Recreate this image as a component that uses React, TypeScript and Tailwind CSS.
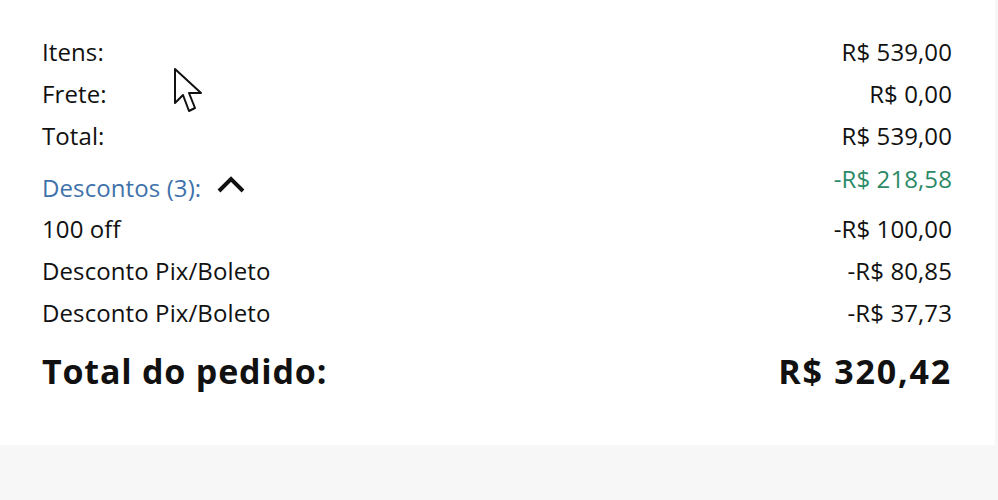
import React from "react";

const Row = ({ label, value, valueClass = "" }: { label: string; value: string; valueClass?: string }) => (
  <div className="flex h-[42px] items-center justify-between">
    <span>{label}</span>
    <span className={valueClass}>{value}</span>
  </div>
);

export default function App() {
  return (
    <div className="relative h-[500px] w-[998px] bg-[#f7f7f7]" style={{ fontFamily: '"Open Sans", "Noto Sans", sans-serif' }}>
      <div className="flex h-[445px] w-[995px] flex-col bg-white pl-[42px] pr-[43px] pt-[31px] text-[24px] font-medium tracking-[0.1px] text-[#111]">
        <Row label="Itens:" value="R$ 539,00" />
        <Row label="Frete:" value="R$ 0,00" />
        <Row label="Total:" value="R$ 539,00" />
        <div className="flex h-[51px] justify-between">
          <div className="flex items-center gap-[15px] pt-[11px]">
            <span className="text-[#3f72ab]">Descontos (3):</span>
            <svg width="30" height="20" viewBox="0 0 30 20" className="mt-[-8px]">
              <path d="M3 17 L15 5 L27 17" fill="none" stroke="#111" strokeWidth="4" />
            </svg>
          </div>
          <span className="pt-[4px] text-[#2b8a67]">-R$ 218,58</span>
        </div>
        <Row label="100 off" value="-R$ 100,00" />
        <Row label="Desconto Pix/Boleto" value="-R$ 80,85" />
        <Row label="Desconto Pix/Boleto" value="-R$ 37,73" />
        <div className="flex h-[74px] items-center justify-between text-[34px] font-bold tracking-[0.8px]">
          <span>Total do pedido:</span>
          <span className="tracking-[1.8px]">R$ 320,42</span>
        </div>
      </div>
      <svg className="absolute left-[173px] top-[67px]" width="34" height="50" viewBox="0 0 34 50">
        <path d="M2 2 L2 36 L10 28 L16 44 L22 41 L16 26 L28 26 Z" fill="#fff" stroke="#111" strokeWidth="2" strokeLinejoin="round" />
      </svg>
    </div>
  );
}
